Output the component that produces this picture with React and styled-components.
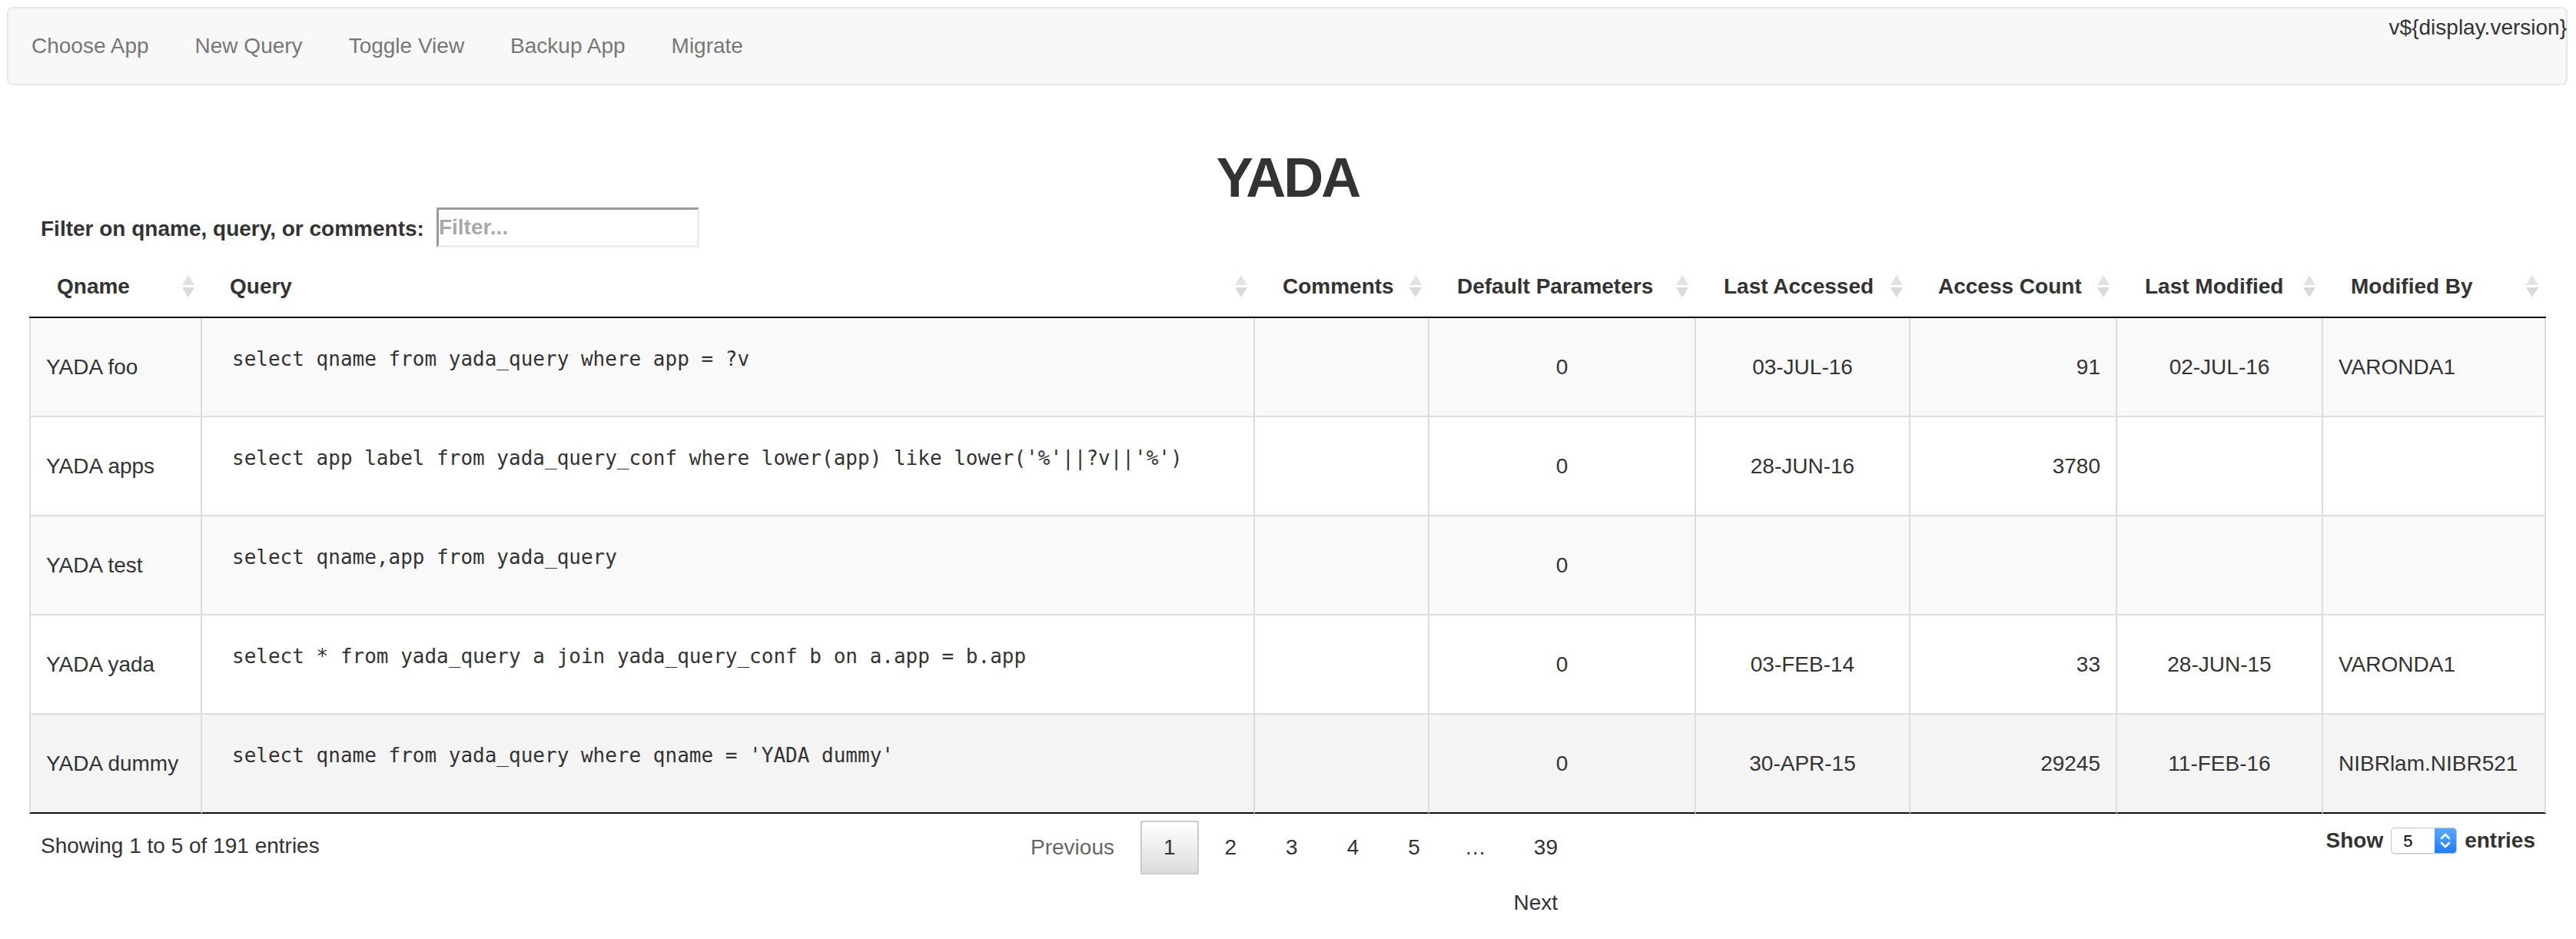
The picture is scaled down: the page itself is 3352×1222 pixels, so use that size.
import React from "react";
import styled, { createGlobalStyle } from "styled-components";

const GlobalStyle = createGlobalStyle`
  * {
    box-sizing: border-box;
  }
  html,
  body {
    margin: 0;
    padding: 0;
    background: #fff;
  }
  body {
    font-family: "Liberation Sans", Arial, Helvetica, sans-serif;
    font-size: 28px;
    line-height: 40px;
    color: #333;
  }
`;

const columns = [
  { key: "qname", label: "Qname", width: 225, align: "left" },
  { key: "query", label: "Query", width: 1370, align: "left" },
  { key: "comments", label: "Comments", width: 227, align: "left" },
  { key: "params", label: "Default Parameters", width: 347, align: "center" },
  { key: "accessed", label: "Last Accessed", width: 279, align: "center" },
  { key: "count", label: "Access Count", width: 269, align: "right" },
  { key: "modified", label: "Last Modified", width: 268, align: "center" },
  { key: "by", label: "Modified By", width: 290, align: "left" },
];

const rows = [
  {
    qname: "YADA foo",
    query: "select qname from yada_query where app = ?v",
    comments: "",
    params: "0",
    accessed: "03-JUL-16",
    count: "91",
    modified: "02-JUL-16",
    by: "VARONDA1",
  },
  {
    qname: "YADA apps",
    query:
      "select app label from yada_query_conf where lower(app) like lower('%'||?v||'%')",
    comments: "",
    params: "0",
    accessed: "28-JUN-16",
    count: "3780",
    modified: "",
    by: "",
  },
  {
    qname: "YADA test",
    query: "select qname,app from yada_query",
    comments: "",
    params: "0",
    accessed: "",
    count: "",
    modified: "",
    by: "",
  },
  {
    qname: "YADA yada",
    query: "select * from yada_query a join yada_query_conf b on a.app = b.app",
    comments: "",
    params: "0",
    accessed: "03-FEB-14",
    count: "33",
    modified: "28-JUN-15",
    by: "VARONDA1",
  },
  {
    qname: "YADA dummy",
    query: "select qname from yada_query where qname = 'YADA dummy'",
    comments: "",
    params: "0",
    accessed: "30-APR-15",
    count: "29245",
    modified: "11-FEB-16",
    by: "NIBRlam.NIBR521",
  },
];

const navItems = ["Choose App", "New Query", "Toggle View", "Backup App", "Migrate"];

const SortIcon = () => (
  <svg width="16" height="30" viewBox="0 0 16 30">
    <polygon points="0,13 8,0 16,13" fill="#e3e3e3" />
    <polygon points="0,16 16,16 8,29" fill="#d9d9d9" />
  </svg>
);

const Chevrons = () => (
  <svg width="28" height="34" viewBox="0 0 28 34">
    <path
      d="M9 14 L14 9 L19 14 M9 20 L14 25 L19 20"
      fill="none"
      stroke="#fff"
      strokeWidth="2.6"
      strokeLinecap="round"
      strokeLinejoin="round"
    />
  </svg>
);

const App = () => {
  return (
    <>
      <GlobalStyle />
      <StyledNavbar>
        <StyledNavList>
          {navItems.map((item) => (
            <li key={item}>
              <StyledNavLink href="#">{item}</StyledNavLink>
            </li>
          ))}
        </StyledNavList>
        <StyledVersion>v${"{display.version}"}</StyledVersion>
      </StyledNavbar>

      <StyledMain>
        <StyledTitle>YADA</StyledTitle>
        <StyledFilterRow>
          <StyledFilterLabel htmlFor="filter">
            Filter on qname, query, or comments:
          </StyledFilterLabel>
          <StyledFilterInput id="filter" placeholder="Filter..." />
        </StyledFilterRow>

        <StyledTable>
          <colgroup>
            {columns.map((col) => (
              <col key={col.key} style={{ width: col.width }} />
            ))}
          </colgroup>
          <thead>
            <tr>
              {columns.map((col) => (
                <StyledTh key={col.key}>
                  <StyledThInner>
                    <span>{col.label}</span>
                    <SortIcon />
                  </StyledThInner>
                </StyledTh>
              ))}
            </tr>
          </thead>
          <tbody>
            {rows.map((row, i) => (
              <StyledRow key={row.qname} $striped={i % 2 === 0} $hover={i === rows.length - 1}>
                {columns.map((col) =>
                  col.key === "query" ? (
                    <StyledTd key={col.key} $align={col.align}>
                      <StyledPre>{row.query}</StyledPre>
                    </StyledTd>
                  ) : (
                    <StyledTd key={col.key} $align={col.align}>
                      {row[col.key]}
                    </StyledTd>
                  )
                )}
              </StyledRow>
            ))}
          </tbody>
        </StyledTable>

        <StyledFooter>
          <StyledInfo>Showing 1 to 5 of 191 entries</StyledInfo>
          <StyledPaginate>
            <StyledPageButton $disabled>Previous</StyledPageButton>
            <StyledPageButton $current>1</StyledPageButton>
            <StyledPageButton>2</StyledPageButton>
            <StyledPageButton>3</StyledPageButton>
            <StyledPageButton>4</StyledPageButton>
            <StyledPageButton>5</StyledPageButton>
            <StyledEllipsis>…</StyledEllipsis>
            <StyledPageButton>39</StyledPageButton>
            <StyledPageButton>Next</StyledPageButton>
          </StyledPaginate>
          <StyledLength>
            <span>Show</span>
            <StyledSelectBox>
              <StyledSelect defaultValue="5">
                <option value="5">5</option>
                <option value="10">10</option>
                <option value="25">25</option>
              </StyledSelect>
              <StyledSelectCap>
                <Chevrons />
              </StyledSelectCap>
            </StyledSelectBox>
            <span>entries</span>
          </StyledLength>
        </StyledFooter>
      </StyledMain>
    </>
  );
};

export default App;

const StyledNavbar = styled.nav`
  display: flex;
  justify-content: space-between;
  align-items: flex-start;
  margin: 9px 11px 0 9px;
  height: 102px;
  background: #f8f8f8;
  border: 2px solid #e7e7e7;
  border-radius: 8px;
`;
const StyledNavList = styled.ul`
  display: flex;
  list-style: none;
  margin: 0;
  padding: 0;
`;
const StyledNavLink = styled.a`
  display: block;
  padding: 29px 30px;
  line-height: 40px;
  color: #777;
  text-decoration: none;
`;
const StyledVersion = styled.div`
  margin: 5px -1px 0 0;
  line-height: 40px;
  color: #333;
`;
const StyledMain = styled.main`
  padding: 0 39px 0 38px;
`;
const StyledTitle = styled.h1`
  margin: 81px 0 0;
  font-size: 72px;
  line-height: 79px;
  font-weight: bold;
  letter-spacing: -3px;
  text-align: center;
  color: #333;
`;
const StyledFilterRow = styled.div`
  display: flex;
  align-items: center;
  height: 52px;
  margin: -1px 0 10px;
  padding-left: 15px;
`;
const StyledFilterLabel = styled.label`
  padding-top: 3px;
  font-weight: bold;
`;
const StyledFilterInput = styled.input`
  width: 342px;
  height: 52px;
  margin-left: 16px;
  padding: 0;
  font: inherit;
  font-weight: bold;
  color: #333;
  background: #fff;
  border-style: solid;
  border-width: 3px;
  border-color: #9b9b9b #ececec #ececec #9b9b9b;
  outline: none;
  &::placeholder {
    color: #a9a9a9;
  }
`;
const StyledTable = styled.table`
  width: 100%;
  table-layout: fixed;
  border-collapse: separate;
  border-spacing: 0;
`;
const StyledTh = styled.th`
  padding: 21px 10px 19px 36px;
  text-align: left;
  font-weight: bold;
  line-height: 40px;
  border-bottom: 2px solid #111;
  vertical-align: middle;
`;
const StyledThInner = styled.div`
  display: flex;
  align-items: center;
  justify-content: space-between;
  white-space: nowrap;
`;
const StyledRow = styled.tr`
  background: ${(p) => (p.$hover ? "#f4f4f4" : p.$striped ? "#f9f9f9" : "#fff")};
  & > td {
    border-top: 2px solid #ddd;
  }
  &:first-child > td {
    border-top: none;
  }
  &:last-child > td {
    border-bottom: 2px solid #111;
  }
`;
const StyledTd = styled.td`
  padding: 16px 20px;
  text-align: ${(p) => p.$align};
  vertical-align: middle;
  border-right: 2px solid #ddd;
  &:first-child {
    border-left: 2px solid #ddd;
  }
`;
const StyledPre = styled.pre`
  margin: 0 0 20px;
  padding: 19px;
  font-family: "DejaVu Sans Mono", Menlo, monospace;
  font-size: 26px;
  line-height: 37px;
  color: #333;
  white-space: pre-wrap;
`;
const StyledFooter = styled.div`
  display: grid;
  grid-template-columns: 1fr 763px 1fr;
  align-items: start;
`;
const StyledInfo = styled.div`
  padding: 22px 0 0 15px;
`;
const StyledPaginate = styled.div`
  display: flex;
  flex-wrap: wrap;
  justify-content: flex-end;
  row-gap: 2px;
  padding-top: 9px;
`;
const StyledPageButton = styled.a`
  display: block;
  margin-left: 4px;
  padding: 13px 28px;
  min-width: 42px;
  text-align: center;
  line-height: 40px;
  color: ${(p) => (p.$disabled ? "#666" : "#333")};
  border: 2px solid ${(p) => (p.$current ? "#cbcbcb" : "transparent")};
  border-radius: 2px;
  background: ${(p) =>
    p.$current ? "linear-gradient(to bottom, #fff 0%, #dcdcdc 100%)" : "transparent"};
  cursor: pointer;
`;
const StyledEllipsis = styled.span`
  padding: 15px 28px;
  line-height: 40px;
`;
const StyledLength = styled.div`
  justify-self: end;
  display: flex;
  align-items: center;
  gap: 10px;
  padding: 15px 14px 0 0;
  font-weight: bold;
`;
const StyledSelectBox = styled.span`
  display: inline-flex;
  width: 86px;
  height: 34px;
  background: #fff;
  border: 1px solid #c4c4c4;
  border-radius: 5px;
  box-shadow: 0 1px 1px rgba(0, 0, 0, 0.12);
  overflow: hidden;
`;
const StyledSelect = styled.select`
  appearance: none;
  flex: 1;
  min-width: 0;
  padding: 0 0 0 15px;
  border: none;
  background: transparent;
  font-family: "Liberation Sans", Arial, sans-serif;
  font-size: 22px;
  font-weight: normal;
  color: #000;
  outline: none;
`;
const StyledSelectCap = styled.span`
  display: flex;
  align-items: center;
  justify-content: center;
  width: 28px;
  background: linear-gradient(to bottom, #5aa9ff 0%, #1b7cf6 100%);
`;
